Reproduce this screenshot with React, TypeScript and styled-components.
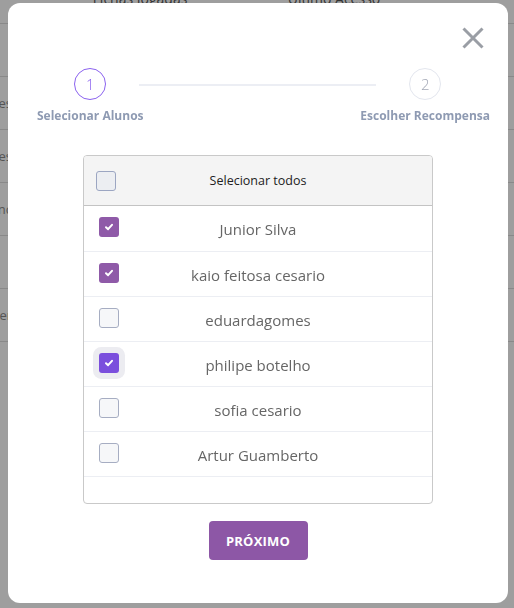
import React from "react";
import styled, { createGlobalStyle } from "styled-components";

const Global = createGlobalStyle`
  html, body { margin: 0; padding: 0; background: #fff; overflow: hidden; }
  body { font-family: "Open Sans", "Noto Sans", sans-serif; }
  * { box-sizing: border-box; }
`;

/* ---------- background page ---------- */
const Page = styled.div`
  width: 514px;
  height: 608px;
  display: flex;
  flex-direction: column;
  margin-top: -30px;
`;

const BgRow = styled.div<{ $h: number }>`
  height: ${(p) => p.$h}px;
  flex: none;
  display: grid;
  grid-template-columns: 12px 256px 132px 1fr;
  align-items: center;
  border-bottom: 1px solid #dedede;
  font-size: 13px;
  color: #8a8a8a;
`;

const BgCell = styled.div<{ $end?: boolean }>`
  display: flex;
  justify-content: ${(p) => (p.$end ? "flex-end" : "center")};
  white-space: nowrap;
  overflow: hidden;
`;

const HeadCell = styled(BgCell)`
  align-self: end;
  padding-bottom: 15px;
  font-size: 14px;
  color: #555;
`;

const Backdrop = styled.div`
  position: fixed;
  inset: 0;
  background: rgba(0, 0, 0, 0.38);
`;

/* ---------- modal ---------- */
const Modal = styled.div`
  position: fixed;
  left: 8px;
  top: 3px;
  width: 500px;
  height: 600px;
  background: #fff;
  border-radius: 12px;
  display: flex;
  flex-direction: column;
  align-items: center;
`;

const CloseRow = styled.div`
  align-self: stretch;
  display: flex;
  justify-content: flex-end;
  padding: 22px 22px 0 0;
`;

const CloseButton = styled.button`
  width: 26px;
  height: 26px;
  border: 0;
  padding: 0;
  background: transparent;
  display: flex;
  align-items: center;
  justify-content: center;
`;

const Stepper = styled.div`
  align-self: stretch;
  display: grid;
  grid-template-columns: auto 1fr auto;
  align-items: start;
  padding: 0 18px 0 29px;
  margin-top: 17px;
`;

const Step = styled.div`
  display: flex;
  flex-direction: column;
  align-items: center;
`;

const Circle = styled.div<{ $active?: boolean }>`
  width: 32px;
  height: 32px;
  border-radius: 50%;
  border: ${(p) => (p.$active ? "1.5px solid #8b62ef" : "1px solid #e3e6ee")};
  color: ${(p) => (p.$active ? "#8b62ef" : "#a3a8b6")};
  display: flex;
  align-items: center;
  justify-content: center;
  font-size: 15px;
  font-weight: 300;
`;

const StepLabel = styled.div`
  margin-top: 8px;
  font-size: 12px;
  font-weight: 700;
  color: #8e9ab2;
  white-space: nowrap;
  line-height: 16px;
`;

const Connector = styled.div`
  height: 2px;
  background: #eceef4;
  margin: 16px -16px 0 -5px;
`;

const Card = styled.div`
  margin-top: 31px;
  width: 350px;
  height: 349px;
  border: 1px solid #c9c9c9;
  border-radius: 4px;
  overflow: hidden;
  display: flex;
  flex-direction: column;
`;

const HeaderRow = styled.div`
  height: 50px;
  flex: none;
  display: grid;
  grid-template-columns: 48px 1fr 48px;
  align-items: center;
  background: #f4f4f4;
  border-bottom: 1px solid #c3c3c3;
  padding-left: 12px;
`;

const HeaderText = styled.div`
  text-align: center;
  font-size: 12.5px;
  color: #222;
  margin-left: -12px;
`;

const Row = styled.div<{ $first?: boolean }>`
  height: ${(p) => (p.$first ? 46 : 45)}px;
  flex: none;
  display: grid;
  grid-template-columns: 48px 1fr 48px;
  align-items: center;
  border-bottom: 1px solid #eceef3;
  padding-left: 15px;
`;

const Name = styled.div`
  text-align: center;
  font-size: 15px;
  color: #666;
  margin-left: -15px;
  padding-top: 1px;
`;

const Box = styled.span<{ $checked?: boolean; $focus?: boolean; $variant?: "header" }>`
  width: 20px;
  height: 20px;
  border-radius: 3px;
  display: flex;
  align-items: center;
  justify-content: center;
  margin-top: ${(p) => (p.$variant === "header" ? "0" : "-3px")};
  background: ${(p) =>
    p.$checked ? (p.$focus ? "#7b4fdd" : "#8f5aa8") : p.$variant === "header" ? "#eceef2" : "#f6f7f9"};
  border: ${(p) =>
    p.$checked ? "none" : p.$variant === "header" ? "1px solid #9ca6c2" : "1px solid #a6adc2"};
  box-shadow: ${(p) => (p.$focus ? "0 0 0 6px #ececf1" : "none")};
`;

const NextButton = styled.button`
  margin-top: 17px;
  width: 99px;
  height: 39px;
  flex: none;
  border: 0;
  border-radius: 4px;
  background: #8d57a6;
  color: #fff;
  font-family: "Open Sans", sans-serif;
  font-weight: 700;
  font-size: 13px;
  letter-spacing: 0.2px;
`;

const Check = () => (
  <svg width="10" height="10" viewBox="0 0 10 10">
    <path d="M2 5.2 L4.1 7.2 L8 2.8" fill="none" stroke="#fff" strokeWidth="2" strokeLinecap="round" strokeLinejoin="round" />
  </svg>
);

const students = [
  { name: "Junior Silva", checked: true },
  { name: "kaio feitosa cesario", checked: true },
  { name: "eduardagomes", checked: false },
  { name: "philipe botelho", checked: true, focus: true },
  { name: "sofia cesario", checked: false },
  { name: "Artur Guamberto", checked: false },
];

const bgRows = ["", "Reses", "Reses", "Joanc", "", "Xaner"];

export default function App() {
  return (
    <>
      <Global />
      <Page>
        <BgRow $h={54}>
          <BgCell />
          <HeadCell>Fichas Jogadas</HeadCell>
          <HeadCell>Último Acesso</HeadCell>
          <BgCell />
        </BgRow>
        {bgRows.map((r, i) => (
          <BgRow key={i} $h={53}>
            <BgCell $end>{r}</BgCell>
            <BgCell />
            <BgCell />
            <BgCell />
          </BgRow>
        ))}
      </Page>
      <Backdrop />
      <Modal>
        <CloseRow>
          <CloseButton aria-label="Fechar">
            <svg width="22" height="22" viewBox="0 0 22 22">
              <path d="M1.5 1.5 L20.5 20.5 M20.5 1.5 L1.5 20.5" stroke="#9a9ea5" strokeWidth="3" />
            </svg>
          </CloseButton>
        </CloseRow>
        <Stepper>
          <Step>
            <Circle $active>1</Circle>
            <StepLabel>Selecionar Alunos</StepLabel>
          </Step>
          <Connector />
          <Step>
            <Circle>2</Circle>
            <StepLabel>Escolher Recompensa</StepLabel>
          </Step>
        </Stepper>
        <Card>
          <HeaderRow>
            <Box $variant="header" />
            <HeaderText>Selecionar todos</HeaderText>
            <span />
          </HeaderRow>
          {students.map((s, i) => (
            <Row key={s.name} $first={i === 0}>
              <Box $checked={s.checked} $focus={s.focus}>
                {s.checked && <Check />}
              </Box>
              <Name>{s.name}</Name>
              <span />
            </Row>
          ))}
        </Card>
        <NextButton>PRÓXIMO</NextButton>
      </Modal>
    </>
  );
}
